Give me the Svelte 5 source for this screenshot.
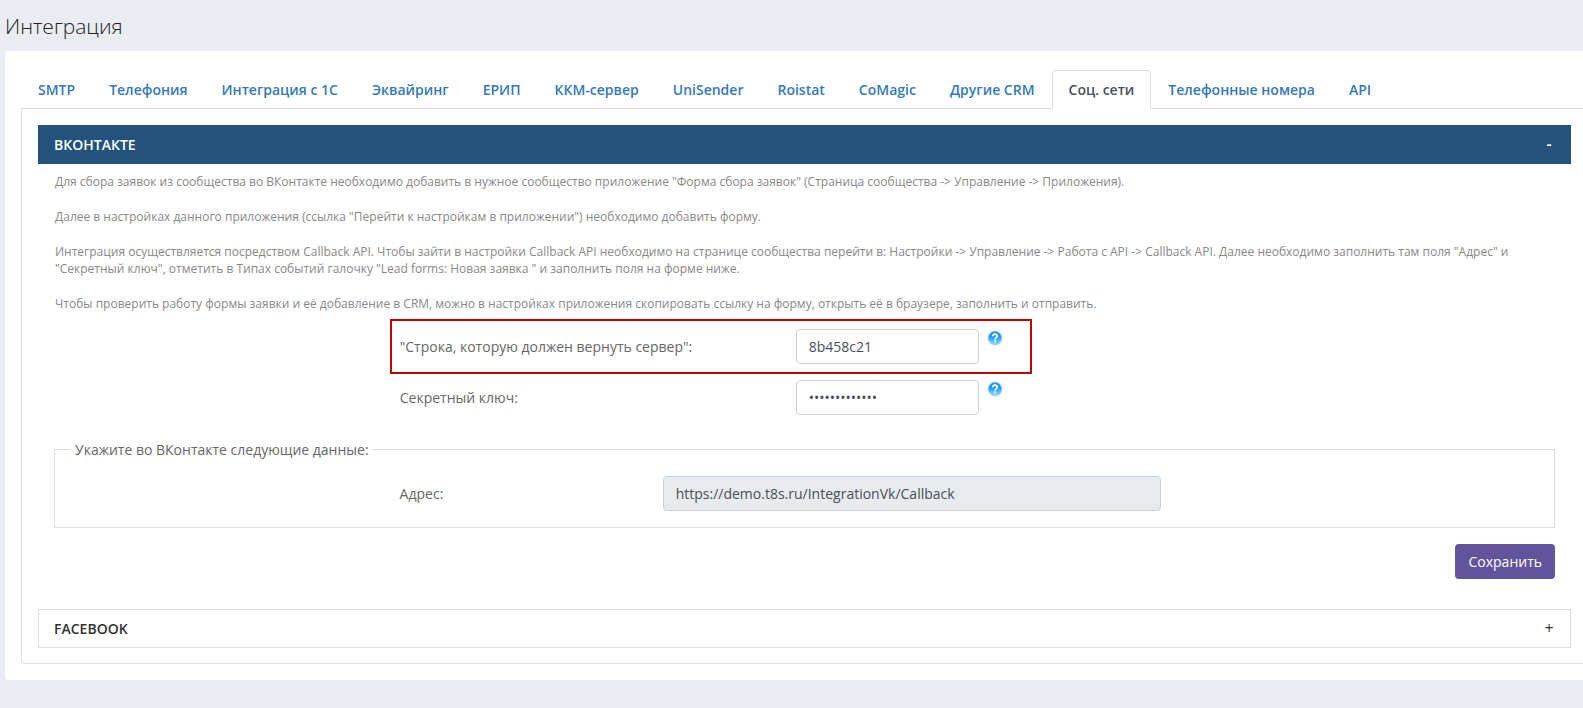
<script>
  const tabs = [
    'SMTP', 'Телефония', 'Интеграция с 1С', 'Эквайринг', 'ЕРИП', 'ККМ-сервер', 'UniSender',
    'Roistat', 'CoMagic', 'Другие CRM', 'Соц. сети', 'Телефонные номера', 'API'
  ];
  let active = $state('Соц. сети');
  let returned = $state('8b458c21');
  let secret = $state('secretkey1234');

  function select(event, tab) {
    event.preventDefault();
    active = tab;
  }
</script>

{#snippet help()}
  <svg class="help" viewBox="0 0 16 16" aria-hidden="true">
    <defs>
      <linearGradient id="help-fill" x1="0" y1="0" x2="0" y2="1">
        <stop offset="0" stop-color="#1590f0" />
        <stop offset="0.45" stop-color="#20a2fb" />
        <stop offset="1" stop-color="#8adcff" />
      </linearGradient>
    </defs>
    <circle cx="8" cy="8" r="7.5" fill="#b9d3ee" />
    <circle cx="8" cy="8" r="6.4" fill="url(#help-fill)" />
    <path d="M5.9 6.2C5.9 3.4 10.2 3.5 10.2 6C10.2 7.6 8.1 7.6 8.1 9.4" fill="none" stroke="#fff" stroke-width="1.7" />
    <rect x="7.2" y="10.4" width="1.8" height="1.8" fill="#fff" />
  </svg>
{/snippet}

<main>
  <h1>Интеграция</h1>
  <section class="card">
    <nav>
      {#each tabs as tab}
        <a href="#tab" class:active={tab === active} onclick={(e) => select(e, tab)}>{tab}</a>
      {/each}
    </nav>
    <div class="panel">
      <button type="button" class="bar open"><span>ВКОНТАКТЕ</span><span class="sign">-</span></button>
      <form class="body" onsubmit={(e) => e.preventDefault()}>
        <div class="notes">
          <p>Для сбора заявок из сообщества во ВКонтакте необходимо добавить в нужное сообщество приложение "Форма сбора заявок" (Страница сообщества -&gt; Управление -&gt; Приложения).</p>
          <p>Далее в настройках данного приложения (ссылка "Перейти к настройкам в приложении") необходимо добавить форму.</p>
          <p>Интеграция осуществляется посредством Callback API. Чтобы зайти в настройки Callback API необходимо на странице сообщества перейти в: Настройки -&gt; Управление -&gt; Работа с API -&gt; Callback API. Далее необходимо заполнить там поля "Адрес" и "Секретный ключ", отметить в Типах событий галочку "Lead forms: Новая заявка " и заполнить поля на форме ниже.</p>
          <p>Чтобы проверить работу формы заявки и её добавление в CRM, можно в настройках приложения скопировать ссылку на форму, открыть её в браузере, заполнить и отправить.</p>
        </div>
        <div class="fields">
          <div class="field marked">
            <label for="returned">"Строка, которую должен вернуть сервер":</label>
            <input id="returned" type="text" bind:value={returned} />
            {@render help()}
          </div>
          <div class="field">
            <label for="secret">Секретный ключ:</label>
            <input id="secret" type="password" autocomplete="off" bind:value={secret} />
            {@render help()}
          </div>
        </div>
        <fieldset>
          <legend>Укажите во ВКонтакте следующие данные:</legend>
          <div class="address">
            <label for="address">Адрес:</label>
            <input id="address" type="text" readonly value="https://demo.t8s.ru/IntegrationVk/Callback" />
          </div>
        </fieldset>
        <button type="submit" class="save">Сохранить</button>
      </form>
      <button type="button" class="bar"><span>FACEBOOK</span><span class="sign">+</span></button>
    </div>
  </section>
</main>

<style>
  :global(body) {
    margin: 0;
    background: #e9edf2;
  }
  main {
    padding: 12px 0 28px 5px;
    font: 14px/21px "Open Sans", "Noto Sans", sans-serif;
    color: #666;
    overflow-x: hidden;
  }
  main :global(*) {
    box-sizing: border-box;
  }
  h1 {
    margin: 0 0 11px;
    font-size: 21px;
    line-height: 28px;
    font-weight: 300;
    color: #222;
  }
  .card {
    background: #fff;
    border-radius: 4px 0 0 4px;
    padding: 19px 0 16px 16px;
  }
  nav {
    display: flex;
    border-bottom: 1px solid #dcdfe2;
  }
  nav a {
    padding: 8px 16px;
    margin-bottom: -1px;
    border: 1px solid transparent;
    border-radius: 4px 4px 0 0;
    line-height: 21px;
    font-weight: 600;
    color: #337ab7;
    text-decoration: none;
    white-space: nowrap;
  }
  nav a.active {
    color: #495057;
    background: #fff;
    border-color: #dcdfe2;
    border-bottom-color: #fff;
  }
  .panel {
    border: solid #dcdfe2;
    border-width: 0 0 1px 1px;
    border-radius: 0 0 0 4px;
    padding: 16px 12px 15px 16px;
  }
  .bar {
    display: flex;
    justify-content: space-between;
    width: 100%;
    padding: 8px 15px;
    border: 1px solid #dcdfe2;
    background: #fff;
    font: 600 14px/21px "Open Sans", "Noto Sans", sans-serif;
    color: #333;
  }
  .bar.open {
    background: #23527c;
    border-color: #23527c;
    color: #fff;
  }
  .sign {
    width: 12px;
    text-align: center;
    font-size: 16px;
    font-weight: 400;
  }
  .open .sign {
    font-weight: 600;
  }
  .body {
    display: flex;
    flex-direction: column;
    padding: 9px 16px 30px;
  }
  .notes {
    display: grid;
    gap: 18px;
    margin-bottom: 9px;
    padding-left: 1px;
    font-size: 12px;
    line-height: 17px;
    color: #888;
  }
  p {
    margin: 0;
  }
  .fields {
    margin-left: 22.5%;
    width: 42.5%;
  }
  .field {
    display: flex;
    align-items: flex-start;
    padding: 8px;
  }
  .marked {
    outline: 2px solid #b90504;
  }
  label {
    flex: 1;
    line-height: 35px;
  }
  input {
    width: 183px;
    height: 35px;
    padding: 0 12px;
    border: 1px solid #ced1da;
    border-radius: 4px;
    background: #fff;
    font: 14px/21px "Open Sans", "Noto Sans", sans-serif;
    color: #495057;
  }
  .help {
    width: 16px;
    height: 16px;
    margin: 1px 19px 0 8px;
  }
  fieldset {
    margin: 16px 0;
    padding: 16px;
    border: 1px solid #dcdfe2;
    min-width: 0;
  }
  legend {
    padding: 0 4px;
  }
  .address {
    display: grid;
    grid-template-columns: 263fr 498fr 377fr;
    padding-left: 22.4%;
  }
  .address input {
    width: 100%;
    background: #e7ebee;
  }
  .save {
    align-self: flex-end;
    height: 35px;
    padding: 0 13px;
    border: 0;
    border-radius: 4px;
    background: #62549a;
    color: #fff;
    font: 14px/21px "Open Sans", "Noto Sans", sans-serif;
  }
</style>
